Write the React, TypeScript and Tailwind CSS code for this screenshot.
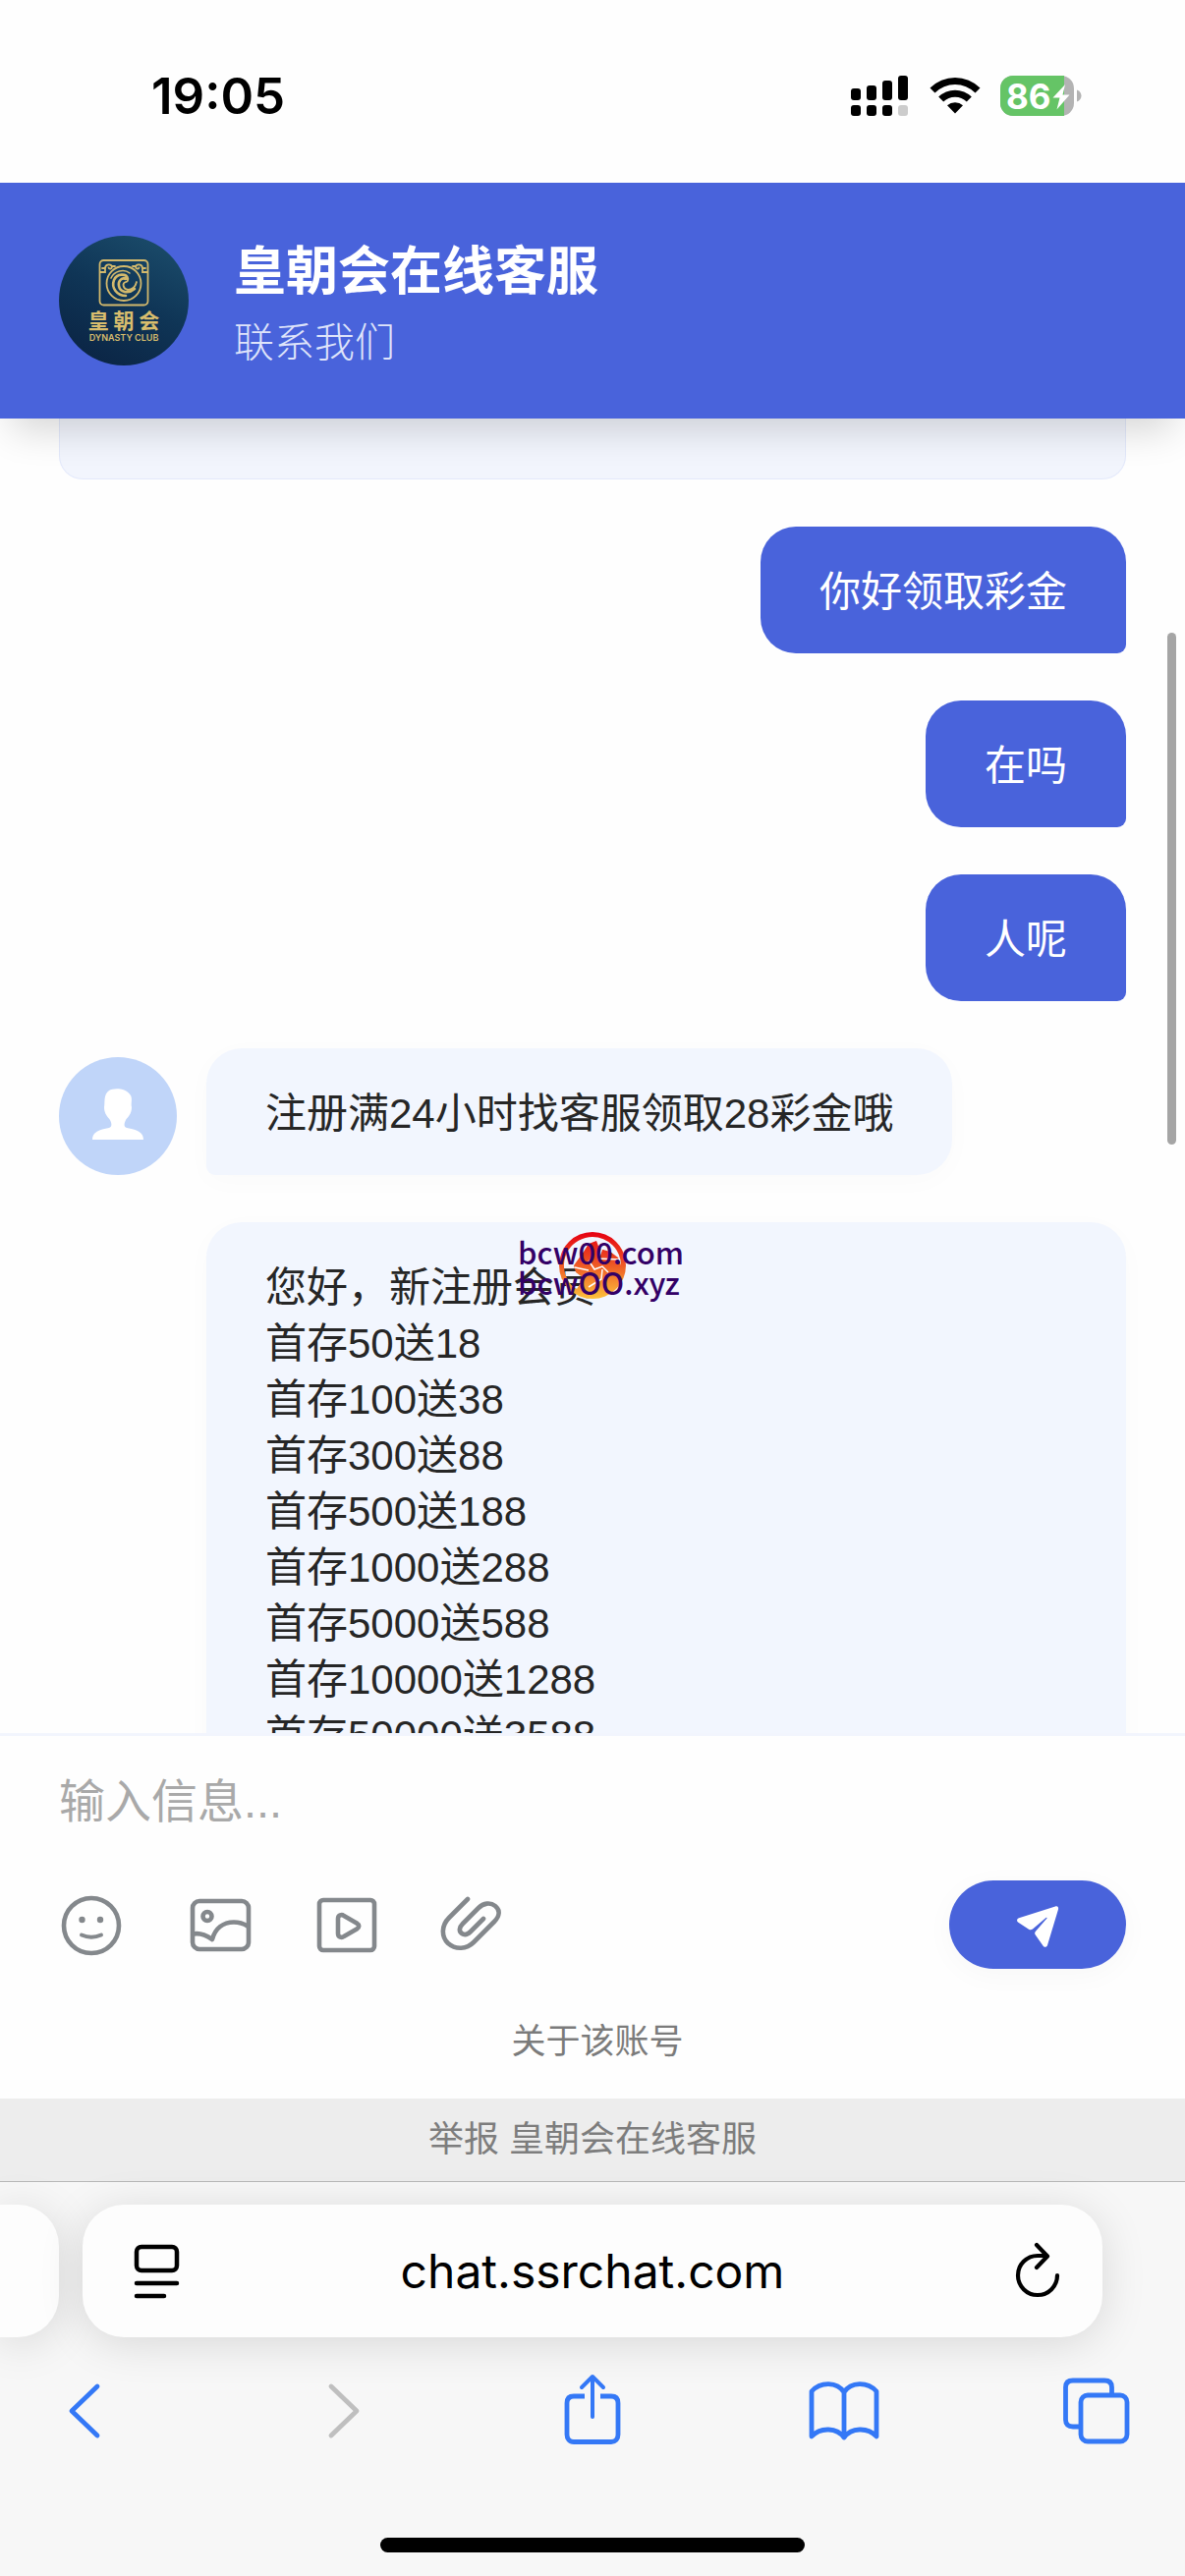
import React from "react";

interface Message {
  from: "me" | "agent";
  text: string;
  avatar?: boolean;
}

const messages: Message[] = [
  { from: "me", text: "你好领取彩金" },
  { from: "me", text: "在吗" },
  { from: "me", text: "人呢" },
  { from: "agent", text: "注册满24小时找客服领取28彩金哦", avatar: true },
  {
    from: "agent",
    text: [
      "您好，新注册会员",
      "首存50送18",
      "首存100送38",
      "首存300送88",
      "首存500送188",
      "首存1000送288",
      "首存5000送588",
      "首存10000送1288",
      "首存50000送3588",
    ].join("\n"),
  },
];

const StatusBar = () => (
  <div className="flex h-[186px] shrink-0 items-center justify-between pt-2.5 pr-[104px] pl-[154px]">
    <span className="font-['Inter',sans-serif] text-[51px] leading-[60px] font-semibold text-black">
      19:05
    </span>
    <div className="flex items-center gap-5">
      <svg className="h-[42px] w-[60px]" viewBox="0 0 60 42" aria-hidden="true">
        <rect x="0" y="13" width="10" height="12" rx="3" />
        <rect x="16" y="10" width="10" height="15" rx="3" />
        <rect x="32" y="5" width="10" height="20" rx="3" />
        <rect x="48" y="0" width="10" height="25" rx="3" />
        <rect x="0" y="30" width="10" height="11" rx="3" />
        <rect x="16" y="30" width="10" height="11" rx="3" />
        <rect x="32" y="30" width="10" height="11" rx="3" />
        <rect x="48" y="30" width="10" height="11" rx="3" fill="#cccccc" />
      </svg>
      <svg className="h-[42px] w-[52px]" viewBox="0 0 52 42" aria-hidden="true">
        <path d="M0.5 12.5A36 36 0 0 1 51.500 12.500L46.500 17.500A29 29 0 0 0 5.500 17.500Z" />
        <path d="M9.200 21.500A24 24 0 0 1 42.800 21.500L37.800 26.500A17 17 0 0 0 14.200 26.500Z" />
        <path d="M18 30.300A12 12 0 0 1 34 30.300L26 38.500Z" />
      </svg>
      <div className="relative flex h-[42px] w-[84px] items-center">
        <svg className="absolute inset-0 h-full w-full" viewBox="0 0 84 42" aria-hidden="true">
          <rect x="0" y="0" width="75" height="41" rx="13" fill="#b3b3b3" />
          <path d="M13 0H65V41H13A13 13 0 0 1 0 28V13A13 13 0 0 1 13 0Z" fill="#65c466" />
          <path d="M78 14.500C81 15.500 82.500 18 82.500 20.500S81 25.500 78 26.500Z" fill="#b3b3b3" />
          <path
            d="M66 9L53.500 22.500H60.500L57.500 34.500L70.500 19.500H63.500Z"
            fill="#fff"
          />
        </svg>
        <span className="relative pl-1.5 font-['Inter',sans-serif] text-[35px] leading-[42px] font-bold text-white">
          86
        </span>
      </div>
    </div>
  </div>
);

const BrandLogo = () => (
  <svg
    className="size-[132px] shrink-0 rounded-full"
    viewBox="0 0 132 132"
    role="img"
    aria-label="皇朝会"
  >
    <defs>
      <linearGradient id="brandBg" x1="0.800" y1="0" x2="0.300" y2="1">
        <stop offset="0" stopColor="#1b4c6b" />
        <stop offset="0.500" stopColor="#0f3556" />
        <stop offset="1" stopColor="#0b2545" />
      </linearGradient>
    </defs>
    <rect width="132" height="132" fill="url(#brandBg)" />
    <g fill="none" stroke="#d3b96c" strokeWidth="1.800" strokeLinecap="round">
      <rect x="41.500" y="25" width="49" height="45.500" rx="4" />
      <circle cx="66" cy="48.500" r="17.500" />
      <path d="M42 37H47V33H44M47 33C47 29 53 28 54 31.500C54 34 51 34 50.500 32.500M54 31H57" />
      <path d="M90 37H85V33H88M85 33C85 29 79 28 78 31.500C78 34 81 34 81.500 32.500M78 31H75" />
      <path d="M70 44C69 38 59 38 56 45C53 53 59 61 68 61" strokeWidth="2.600" />
      <path d="M68 44C64 42 60 46 61 51C62 57 70 60 77 54" strokeWidth="2.600" />
      <path d="M66 43C71 42 71 47 68 47C64 48 65 54 70 55C75 55 78 51 79 47" />
      <path d="M53 43C56 36 66 33 72 38" strokeWidth="1.600" />
    </g>
    <text
      x="66"
      y="94"
      textAnchor="middle"
      fill="#d8bd6d"
      fontSize="21"
      fontWeight="700"
      fontFamily="'Noto Sans CJK SC', sans-serif"
    >
      皇 朝 会
    </text>
    <text
      x="66"
      y="107"
      textAnchor="middle"
      fill="#d8bd6d"
      fontSize="9"
      fontWeight="600"
      fontFamily="Inter, sans-serif"
    >
      DYNASTY CLUB
    </text>
  </svg>
);

const ChatHeader = () => (
  <header className="relative z-10 flex h-[240px] shrink-0 items-center gap-[46px] bg-[#4963db] px-[60px] text-white shadow-[0_24px_36px_-12px_rgba(0,0,0,0.16)]">
    <BrandLogo />
    <div className="pt-3.5">
      <h1 className="text-[53px] leading-[72px] font-bold">皇朝会在线客服</h1>
      <p className="text-[41px] leading-[72px] font-light text-[#dfe4fa]">联系我们</p>
    </div>
  </header>
);

const AgentAvatar = () => (
  <svg className="size-[120px] shrink-0" viewBox="0 0 120 120" role="img" aria-label="客服">
    <circle cx="60" cy="60" r="60" fill="#c0d5f9" />
    <path
      d="M51 34C55 31 69 31 73 39C75 43 73 47 74 51C74 58 70 61 68 64C66 68 66 71 69 72C79 74 86 76 86 84H34C34 76 41 74 51 72C54 71 54 68 52 64C50 61 46 58 46 51C47 47 45 38 51 34Z"
      fill="#fff"
    />
  </svg>
);

const MessageRow = ({ from, text, avatar }: Message) => {
  if (from === "me") {
    return (
      <li className="flex justify-end">
        <p className="rounded-[36px] rounded-br-[9px] bg-[#4963db] px-[60px] pt-[38px] pb-[34px] text-white">
          {text}
        </p>
      </li>
    );
  }
  return (
    <li className="flex items-end gap-[30px]">
      {avatar ? <AgentAvatar /> : <div className="w-[120px] shrink-0" />}
      <p
        className={`rounded-[36px] rounded-bl-[9px] bg-[#f2f6fe] px-[60px] pt-[38px] pb-[34px] whitespace-pre-line text-[#262626] shadow-[0_6px_30px_rgba(0,0,0,0.02)] ${
          avatar ? "" : "flex-1"
        }`}
      >
        {text}
      </p>
    </li>
  );
};

// Floating site mark that sits over the conversation
const SiteMark = () => (
  <div className="pointer-events-none absolute top-[828px] left-1/2 z-10 -ml-[76px] w-[168px] pt-1 font-['Noto_Sans_CJK_SC',sans-serif] text-[31px] leading-[31px] font-medium text-[#330066]">
    <svg className="absolute top-0 left-[42px] size-[68px]" viewBox="0 0 68 68" aria-hidden="true">
      <defs>
        <linearGradient id="markFill" x1="0" y1="0" x2="0" y2="1">
          <stop offset="0" stopColor="#e60012" />
          <stop offset="0.500" stopColor="#ee5a24" />
          <stop offset="1" stopColor="#fdc13c" />
        </linearGradient>
      </defs>
      <path
        fillRule="evenodd"
        fill="url(#markFill)"
        d="M34 0A34 34 0 1 1 34 68A34 34 0 1 1 34 0ZM34 5A29 29 0 0 0 8 47C10 52 14 56 18 58L25 47L17 41L15 34L25 20L30 12L38 9L41 17L52 20L60 26L63 34A29 29 0 0 0 34 5Z"
      />
      <path
        d="M44 16L40 27L62 28M30 29L36 38L44 35L50 41M44 38L43 48L30 56M16 36L30 39"
        fill="none"
        stroke="#fff"
        strokeWidth="1.500"
      />
    </svg>
    <p className="relative">bcw00.com</p>
    <p className="relative">bcwOO.xyz</p>
  </div>
);

const Conversation = () => (
  <main className="relative min-h-0 flex-1">
    <div className="h-full overflow-hidden px-[60px]">
      <div className="h-[62px] rounded-b-3xl border-x border-b border-[#e3e9fb] bg-[#f2f5fd]" />
      <ul className="mt-12 flex flex-col gap-12 text-[42px] leading-[57px]">
        {messages.map((m) => (
          <MessageRow key={m.text} {...m} />
        ))}
      </ul>
    </div>
    <SiteMark />
    <div className="absolute top-[218px] right-[9px] h-[521px] w-[9px] rounded-full bg-[#a5a5a5]" />
  </main>
);

const tool = {
  className: "size-[72px]",
  viewBox: "0 0 72 72",
  fill: "none",
  stroke: "currentColor",
  strokeWidth: 4.6,
  strokeLinecap: "round" as const,
  strokeLinejoin: "round" as const,
};

const Composer = () => (
  <form
    className="shrink-0 border-t-[3px] border-[#f2f5fd] bg-[#fefefe] px-[60px] pt-[30px]"
    onSubmit={(e) => e.preventDefault()}
  >
    <input
      type="text"
      aria-label="输入信息"
      placeholder="输入信息..."
      className="block h-[72px] w-full bg-transparent text-[47px] outline-none placeholder:text-[#a9a9a9]"
    />
    <div className="mt-[45px] flex h-[90px] items-center justify-between">
      <div className="flex items-center gap-14 text-[#84888c]">
        <button type="button" aria-label="表情">
          <svg {...tool}>
            <circle cx="33" cy="37" r="28" />
            <circle cx="23.500" cy="31" r="3.200" fill="currentColor" stroke="none" />
            <circle cx="42" cy="31" r="3.200" fill="currentColor" stroke="none" />
            <path d="M23 46.500Q33 51 43 46.500" strokeWidth="4" />
          </svg>
        </button>
        <button type="button" aria-label="图片">
          <svg {...tool}>
            <rect x="8" y="12" width="57" height="49" rx="7" />
            <circle cx="23" cy="27.500" r="4.500" />
            <path d="M9 45.500C16 44 22 47 28 51C31 40 39 33.500 50 33.500C56 33.500 60 35 64 37.500" />
          </svg>
        </button>
        <button type="button" aria-label="视频">
          <svg {...tool}>
            <rect x="9" y="11" width="56" height="51" rx="4" />
            <path d="M28 30C28 26 32 25.500 34 27L47 34.500C50 36.500 50 38.500 47 40.500L34 48C32 49.500 28 49 28 45Z" />
          </svg>
        </button>
        <button type="button" aria-label="附件">
          <svg {...tool}>
            <path d="M32 10L13 29C5 37 5 48 12 55C20 62 31 61 38 54L59 33C65 27 65 21 60 17C55 13 48 14 43 19L27 35C23 39 23 43 26 45C29 47 32 46 35 43L48 30" />
          </svg>
        </button>
      </div>
      <button
        type="submit"
        aria-label="发送"
        className="flex h-[90px] w-[180px] items-center justify-center rounded-full bg-[#4963db] shadow-[0_6px_30px_rgba(0,0,0,0.03)]"
      >
        <svg className="size-12" viewBox="0 0 48 48" fill="#fff" aria-hidden="true">
          <path d="M42 5.500C44.500 4.800 45.500 6.500 45 8.500L34 45C33.500 47.200 30.500 47.500 29.500 45.500L21.800 34.500C20.800 33 21 32 22 30.800L33.500 17.500C33.800 16.800 33.200 16.500 32.500 17L19 28.500C17.500 29.500 16.500 29.500 15 28.700L4 21.500C2.500 20.200 2.700 18 5 17.200Z" />
        </svg>
      </button>
    </div>
    <div className="flex h-[132px] items-center justify-center pt-4 pl-2.5">
      <a href="#about" className="text-[35px] leading-[48px] text-[#7b7b7b]">
        关于该账号
      </a>
    </div>
  </form>
);

const icon = {
  className: "size-[84px]",
  viewBox: "0 0 84 84",
  fill: "none",
  stroke: "currentColor",
  strokeWidth: 4.8,
  strokeLinecap: "round" as const,
  strokeLinejoin: "round" as const,
};

const BrowserBar = () => (
  <footer className="shrink-0 border-t border-[#b8b8b8] bg-[#f7f7f7]">
    <div className="flex gap-6 pt-[23px] pb-[30px]">
      <div className="h-[135px] w-[60px] shrink-0 rounded-r-[42px] bg-[#fdfdfd] shadow-[0_6px_45px_rgba(0,0,0,0.13)]" />
      <div className="mr-[84px] flex h-[135px] flex-1 items-center justify-between rounded-[42px] bg-[#fdfdfd] px-[42px] text-black shadow-[0_6px_45px_rgba(0,0,0,0.13)]">
        <button type="button" aria-label="页面设置">
          <svg className="h-16 w-[66px]" viewBox="0 0 66 64" fill="none" stroke="currentColor" strokeWidth="4.500" strokeLinecap="round">
            <rect x="13" y="7" width="41" height="24" rx="5" />
            <path d="M13 44H54M13 57H41" />
          </svg>
        </button>
        <span className="font-['Inter',sans-serif] text-[48px] leading-[60px]">chat.ssrchat.com</span>
        <button type="button" aria-label="重新载入">
          <svg className="h-16 w-[66px]" viewBox="-8 0 66 64" fill="none" stroke="currentColor" strokeWidth="4.200" strokeLinecap="round" strokeLinejoin="round">
            <path d="M54 36A20 20 0 1 1 34 16H43M33 5L44 16.500L33 28" />
          </svg>
        </button>
      </div>
    </div>
    <nav className="relative flex justify-between px-[45px] text-[#3478f6]">
      <button type="button" aria-label="后退">
        <svg {...icon}>
          <path d="M54 20L28 45L54 70" />
        </svg>
      </button>
      <button type="button" aria-label="前进" disabled className="text-[#bfbfbf]">
        <svg {...icon}>
          <path d="M34 20L60 45L34 70" />
        </svg>
      </button>
      <button type="button" aria-label="分享">
        <svg {...icon}>
          <path d="M34 30H23C18.500 30 16 32.500 16 37V69C16 73.500 18.500 76.500 23 76.500H61C65.500 76.500 68 73.500 68 69V37C68 32.500 65.500 30 61 30H50" strokeLinecap="butt" />
          <path d="M42 51V10M31 21L42 10L53 21" strokeWidth="4" />
        </svg>
      </button>
      <button type="button" aria-label="书签">
        <svg {...icon}>
          <path d="M40 26C33 15 16 15 7 25V71C16 61 33 62 40 72C47 62 64 61 73 71V25C64 15 47 15 40 26ZM40 26V72" />
        </svg>
      </button>
      <button type="button" aria-label="标签页">
        <svg {...icon}>
          <rect x="23" y="29" width="47" height="47" rx="7" />
          <path d="M23 61H15C10 61 7.500 58.500 7.500 54V21C7.500 16.500 10 14 15 14H47C52 14 54.500 16.500 54.500 21V29" strokeLinecap="butt" />
        </svg>
      </button>
    </nav>
    <div className="mx-auto mt-[90px] mb-6 h-[15px] w-[432px] rounded-full bg-black" />
  </footer>
);

export default function App() {
  return (
    <div className="flex h-screen flex-col overflow-hidden bg-[#fefefe] font-['Liberation_Sans','Noto_Sans_CJK_SC',sans-serif]">
      <StatusBar />
      <ChatHeader />
      <Conversation />
      <Composer />
      <div className="flex h-[84px] shrink-0 items-center justify-center bg-[#ededed]">
        <a href="#report" className="text-[36px] leading-[48px] text-[#7d7d7d]">
          举报 皇朝会在线客服
        </a>
      </div>
      <BrowserBar />
    </div>
  );
}
